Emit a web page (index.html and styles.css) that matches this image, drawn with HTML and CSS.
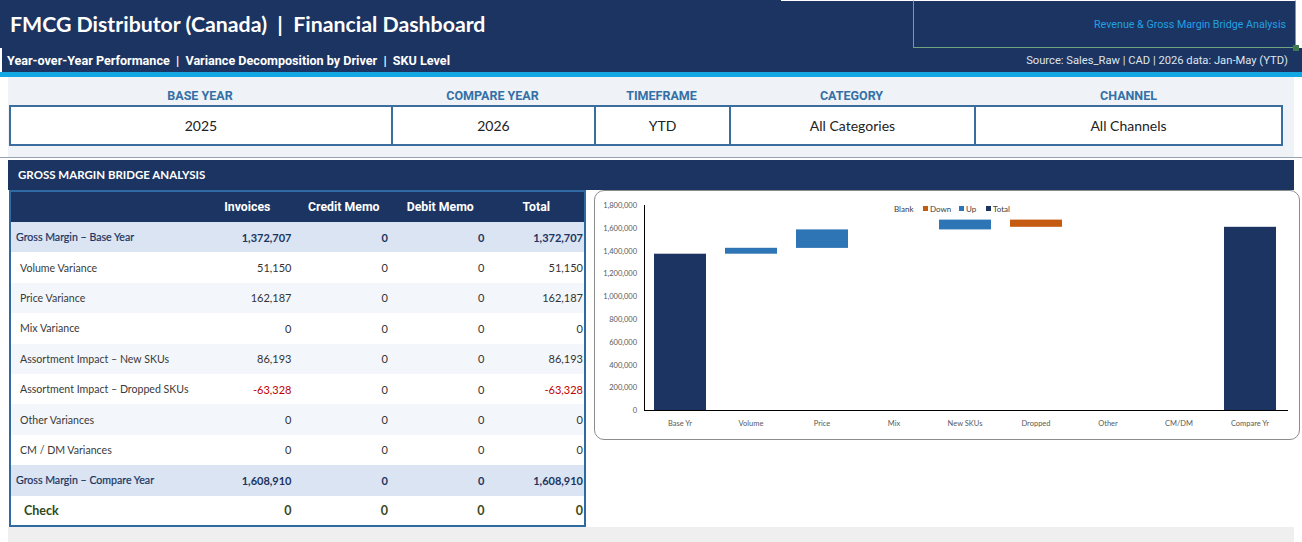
FILE: index.html
```html
<!DOCTYPE html>
<html lang="en">
<head>
    <meta charset="UTF-8">
    <title>FMCG Distributor (Canada) | Financial Dashboard</title>
    <link rel="stylesheet" href="styles.css">
</head>
<body>
    <header class="topbar">
        <div class="title-row">
            <h1>FMCG Distributor (Canada)  |  Financial Dashboard</h1>
            <div class="sel-line"></div>
            <div class="tagbox">Revenue &amp; Gross Margin Bridge Analysis</div>
        </div>
        <div class="sub-row">
            <span class="sub-left">Year-over-Year Performance  |  Variance Decomposition by Driver  |  SKU Level</span>
            <span class="sub-right">Source: Sales_Raw | CAD | 2026 data: Jan-May (YTD)</span>
        </div>
    </header>
    <div class="accent"></div>

    <section class="filters">
        <div class="filter-grid">
            <div class="flabel">BASE YEAR</div>
            <div class="flabel">COMPARE YEAR</div>
            <div class="flabel">TIMEFRAME</div>
            <div class="flabel">CATEGORY</div>
            <div class="flabel">CHANNEL</div>
            <div class="fbox">2025</div>
            <div class="fbox">2026</div>
            <div class="fbox">YTD</div>
            <div class="fbox">All Categories</div>
            <div class="fbox last">All Channels</div>
        </div>
    </section>
    <div class="rule"></div>

    <section class="bridge">
        <h2 class="band">GROSS MARGIN BRIDGE ANALYSIS</h2>
        <div class="bridge-body">
            <table class="gm-table">
                <thead>
                    <tr>
                        <th class="lbl"></th>
                        <th>Invoices</th>
                        <th>Credit Memo</th>
                        <th>Debit Memo</th>
                        <th>Total</th>
                    </tr>
                </thead>
                <tbody>
                    <tr class="total-row">
                        <td class="lbl">Gross Margin – Base Year</td>
                        <td>1,372,707</td><td>0</td><td>0</td><td>1,372,707</td>
                    </tr>
                    <tr>
                        <td class="lbl">Volume Variance</td>
                        <td>51,150</td><td>0</td><td>0</td><td>51,150</td>
                    </tr>
                    <tr class="alt">
                        <td class="lbl">Price Variance</td>
                        <td>162,187</td><td>0</td><td>0</td><td>162,187</td>
                    </tr>
                    <tr>
                        <td class="lbl">Mix Variance</td>
                        <td>0</td><td>0</td><td>0</td><td>0</td>
                    </tr>
                    <tr class="alt">
                        <td class="lbl">Assortment Impact – New SKUs</td>
                        <td>86,193</td><td>0</td><td>0</td><td>86,193</td>
                    </tr>
                    <tr>
                        <td class="lbl">Assortment Impact – Dropped SKUs</td>
                        <td class="neg">-63,328</td><td>0</td><td>0</td><td class="neg">-63,328</td>
                    </tr>
                    <tr class="alt">
                        <td class="lbl">Other Variances</td>
                        <td>0</td><td>0</td><td>0</td><td>0</td>
                    </tr>
                    <tr>
                        <td class="lbl">CM / DM Variances</td>
                        <td>0</td><td>0</td><td>0</td><td>0</td>
                    </tr>
                    <tr class="total-row">
                        <td class="lbl">Gross Margin – Compare Year</td>
                        <td>1,608,910</td><td>0</td><td>0</td><td>1,608,910</td>
                    </tr>
                    <tr class="check-row">
                        <td class="lbl">Check</td>
                        <td>0</td><td>0</td><td>0</td><td>0</td>
                    </tr>
                </tbody>
            </table>

            <div class="chart-card">
                <!-- waterfall: blank series is invisible, bars stack on it -->
                <svg class="chart" width="706" height="250" viewBox="0 0 706 250">
                    <g class="ylab" text-anchor="end">
                        <text x="43" y="18">1,800,000</text>
                        <text x="43" y="41">1,600,000</text>
                        <text x="43" y="64">1,400,000</text>
                        <text x="43" y="86">1,200,000</text>
                        <text x="43" y="109">1,000,000</text>
                        <text x="43" y="132">800,000</text>
                        <text x="43" y="155">600,000</text>
                        <text x="43" y="178">400,000</text>
                        <text x="43" y="200">200,000</text>
                        <text x="43" y="223">0</text>
                    </g>

                    <rect x="60" y="63.7" width="52" height="156.3" fill="#1c3461"/>
                    <rect x="131" y="57.8" width="52" height="5.9" fill="#2e75b6"/>
                    <rect x="202" y="39.4" width="52" height="18.5" fill="#2e75b6"/>
                    <rect x="345" y="29.6" width="52" height="9.8" fill="#2e75b6"/>
                    <rect x="416" y="29.6" width="52" height="7.2" fill="#c55a11"/>
                    <rect x="630" y="36.8" width="52" height="183.2" fill="#1c3461"/>

                    <line x1="50.5" y1="15" x2="50.5" y2="220.5" stroke="#000" stroke-width="1"/>
                    <line x1="50" y1="220.5" x2="694" y2="220.5" stroke="#000" stroke-width="1"/>

                    <g class="xlab" text-anchor="middle">
                        <text x="86" y="236">Base Yr</text>
                        <text x="157" y="236">Volume</text>
                        <text x="228" y="236">Price</text>
                        <text x="300" y="236">Mix</text>
                        <text x="371" y="236">New SKUs</text>
                        <text x="442" y="236">Dropped</text>
                        <text x="514" y="236">Other</text>
                        <text x="585" y="236">CM/DM</text>
                        <text x="656" y="236">Compare Yr</text>
                    </g>

                    <g class="legend">
                        <text x="300" y="22">Blank</text>
                        <rect x="329" y="16" width="5" height="5" fill="#c55a11"/>
                        <text x="336" y="22">Down</text>
                        <rect x="365" y="16" width="5" height="5" fill="#2e75b6"/>
                        <text x="372" y="22">Up</text>
                        <rect x="392" y="16" width="5" height="5" fill="#1c3461"/>
                        <text x="399" y="22">Total</text>
                    </g>
                </svg>
            </div>
        </div>
        <div class="foot"></div>
    </section>
</body>
</html>
```

FILE: styles.css
```css
* {
    box-sizing: border-box;
}
body {
    margin: 0;
    width: 1302px;
    height: 542px;
    overflow: hidden;
    font-family: Lato, "Open Sans", sans-serif;
    color: #333;
    background-color: #fff;
}

/* top banner */
.title-row {
    display: flex;
    align-items: flex-start;
    height: 48px;
    margin-right: 6px;
    background-color: #1c3461;
}
.title-row h1 {
    margin: 0;
    padding: 11px 0 0 10px;
    font-size: 21.3px;
    font-weight: 700;
    color: #fff;
    white-space: pre;
}
.sel-line {
    margin-left: auto;
    width: 132px;
    border-top: 1px solid #fff;
}
.tagbox {
    position: relative;
    width: 383px;
    height: 48px;
    display: flex;
    align-items: center;
    justify-content: flex-end;
    padding-right: 9px;
    border: 1px solid #6fa47c;
    border-top-color: #fff;
    font-family: Roboto, sans-serif;
    font-size: 10.7px;
    color: #22a0e2;
}
.tagbox::after {
    content: "";
    position: absolute;
    right: -4px;
    bottom: -4px;
    width: 6px;
    height: 6px;
    background-color: #3f7a4e;
}
.sub-row {
    display: flex;
    justify-content: space-between;
    align-items: center;
    height: 24px;
    padding: 0 14px 0 5px;
    border-left: 2px solid #fff;
    background-color: #1c3461;
    white-space: pre;
}
.sub-left {
    font-family: Roboto, sans-serif;
    font-weight: 700;
    font-size: 12.6px;
    color: #fff;
}
.sub-right {
    font-family: Roboto, sans-serif;
    font-size: 11.2px;
    color: #dfe5ee;
}
.accent {
    height: 5px;
    background-color: #13a7e3;
}

/* filter strip */
.filters {
    margin-left: 8px;
    width: 1286px;
    height: 80px;
    padding: 12px 0 0 1px;
    background-color: #eff2f6;
}
.filter-grid {
    display: grid;
    grid-template-columns: 382px 203px 135px 245px 309px;
    grid-template-rows: 16px 41px;
}
.flabel {
    text-align: center;
    font-family: Roboto, sans-serif;
    font-weight: 700;
    font-size: 12.5px;
    line-height: 14px;
    color: #3470a6;
}
.fbox {
    display: flex;
    align-items: center;
    justify-content: center;
    background-color: #fff;
    border: 2px solid #3a6e9f;
    border-right: none;
    font-size: 14px;
    color: #222;
}
.fbox.last {
    border-right: 2px solid #3a6e9f;
}
.rule {
    height: 1px;
    background-color: #98a2b0;
}

/* bridge section */
.band {
    margin: 2px 8px 0 8px;
    height: 30px;
    padding-left: 10px;
    line-height: 30px;
    font-size: 11.5px;
    font-weight: 700;
    color: #fff;
    background-color: #1c3461;
}
.bridge-body {
    display: flex;
    align-items: flex-start;
    margin-left: 9px;
}
.gm-table {
    width: 577px;
    border-collapse: collapse;
    border: 2px solid #2f6aa3;
    table-layout: fixed;
    font-size: 11px;
}
.gm-table th {
    height: 31px;
    background-color: #1c3461;
    color: #fff;
    font-family: Roboto, sans-serif;
    font-weight: 700;
    font-size: 12.3px;
    text-align: center;
}
.gm-table th.lbl {
    width: 189px;
}
.gm-table td {
    height: 30.4px;
    padding: 0 4px 0 0;
    text-align: right;
    white-space: nowrap;
}
.gm-table td:last-child {
    padding-right: 1px;
}
.gm-table td.lbl {
    padding-left: 9px;
    text-align: left;
    font-size: 10.6px;
    color: #3a3a3a;
}
.gm-table tr.alt td {
    background-color: #f3f6fa;
}
.gm-table tr.total-row td {
    background-color: #dae4f2;
    color: #1c3461;
    font-weight: 700;
}
.gm-table tr.total-row td.lbl {
    padding-left: 5px;
    color: #1c3461;
    font-weight: 400;
    -webkit-text-stroke: 0.2px #1c3461;
}
.gm-table tr.check-row td {
    color: #3b4a1c;
    font-weight: 700;
    font-size: 12.5px;
}
.gm-table tr.check-row td.lbl {
    padding-left: 13px;
    font-size: 12.5px;
    color: #2d4a17;
}
.gm-table td.neg {
    color: #c00000;
}

/* chart */
.chart-card {
    width: 706px;
    height: 250px;
    margin-left: 8px;
    border: 1px solid #8c8c8c;
    border-radius: 10px;
    overflow: hidden;
}
.chart {
    display: block;
    margin: -1px;
}
.chart text {
    font-family: Lato, sans-serif;
    fill: #595959;
}
.ylab text,
.xlab text {
    font-size: 7.5px;
}
.legend text {
    font-size: 8px;
    fill: #404040;
}
.foot {
    margin: 0 8px;
    height: 20px;
    background-color: #efefef;
}
```
